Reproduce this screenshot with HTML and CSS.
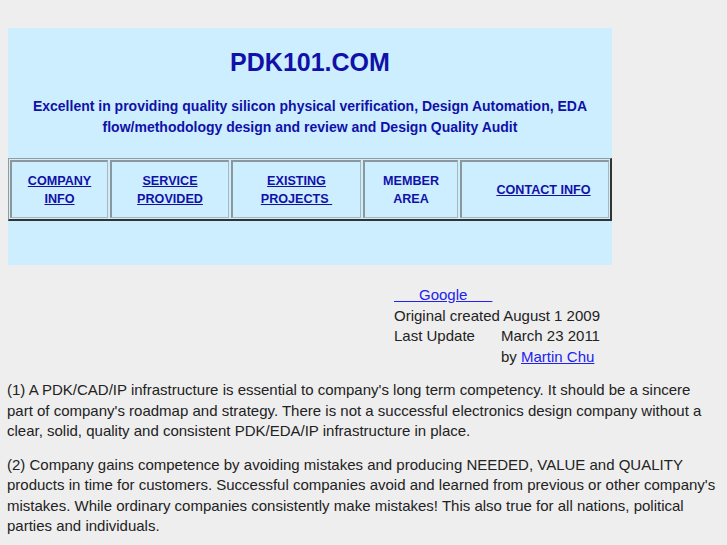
FILE: index.html
```html
<!DOCTYPE html>
<html>
<head>
<meta charset="utf-8">
<title>PDK101.COM</title>
<link rel="stylesheet" href="styles.css">
</head>
<body>
<div class="header">
  <h1 class="title">PDK101.COM</h1>
  <p class="tagline">Excellent in providing quality silicon physical verification, Design Automation, EDA flow/methodology design and review and Design Quality Audit</p>
  <div class="nav">
    <div class="cell c1"><a href="#">COMPANY<br>INFO</a></div>
    <div class="cell c2"><a href="#">SERVICE<br>PROVIDED</a></div>
    <div class="cell c3"><a href="#">EXISTING<br>PROJECTS&nbsp;</a></div>
    <div class="cell c4"><span>MEMBER<br>AREA</span></div>
    <div class="cell c5"><a href="#" class="contact">CONTACT INFO</a></div>
  </div>
</div>
<div class="info">
  <div class="row full"><a href="#" class="blue">&nbsp;&nbsp;&nbsp;&nbsp;&nbsp;&nbsp;Google&nbsp;&nbsp;&nbsp;&nbsp;&nbsp;&nbsp;</a></div>
  <div class="row full">Original created August 1 2009</div>
  <div class="row"><span class="lbl">Last Update</span><span>March 23 2011</span></div>
  <div class="row"><span class="lbl"></span><span>by <a href="#" class="blue">Martin Chu</a></span></div>
</div>
<p class="text">(1) A PDK/CAD/IP infrastructure is essential to company's long term competency. It should be a sincere part of company's roadmap and strategy. There is not a successful electronics design company without a clear, solid, quality and consistent PDK/EDA/IP infrastructure in place.</p>
<p class="text">(2) Company gains competence by avoiding mistakes and producing NEEDED, VALUE and QUALITY products in time for customers. Successful companies avoid and learned from previous or other company's mistakes. While ordinary companies consistently make mistakes! This also true for all nations, political parties and individuals.</p>
</body>
</html>
```
FILE: styles.css
```css
html, body {
  margin: 0;
  background: #eeeeee;
}
body {
  padding: 28px 8px 0 7px;
  font-family: "Liberation Sans", Arial, sans-serif;
  font-size: 15px;
  color: #222222;
}
.header {
  width: 604px;
  margin-left: 1px;
  background: #cceeff;
  padding: 20px 0 44px;
  box-sizing: border-box;
}
.title {
  margin: 0;
  text-align: center;
  font-size: 25px;
  line-height: 28px;
  font-weight: bold;
  color: #1111a8;
}
.tagline {
  margin: 20px 0 20px;
  text-align: center;
  font-size: 14px;
  line-height: 21px;
  font-weight: bold;
  color: #1111a8;
}
.nav {
  display: flex;
  gap: 2px;
  height: 63px;
  box-sizing: border-box;
  border-top: 1px solid #999999;
  border-left: 1px solid #999999;
  border-right: 2px solid #333333;
  border-bottom: 2px solid #333333;
  padding: 1px;
}
.cell {
  box-sizing: border-box;
  border-top: 2px solid #8a979c;
  border-left: 2px solid #8a979c;
  border-right: 1px solid #a9b6bb;
  border-bottom: 1px solid #a9b6bb;
  display: flex;
  align-items: center;
  justify-content: center;
  text-align: center;
  font-size: 12.6px;
  line-height: 18px;
  font-weight: bold;
  color: #1111a8;
}
.cell a { color: #1111a8; }
.c1 { width: 98px; }
.c2 { width: 119px; }
.c3 { width: 130px; }
.c4 { width: 95px; }
.c5 { flex: 1; }
.contact { margin-left: 17px; }
.info {
  margin: 20px 0 0 387px;
  line-height: 20.5px;
}
.row { display: flex; }
.lbl { width: 107px; }
.blue { color: #2222ee; }
.text {
  margin: 13px 0;
  line-height: 20.5px;
}
```
